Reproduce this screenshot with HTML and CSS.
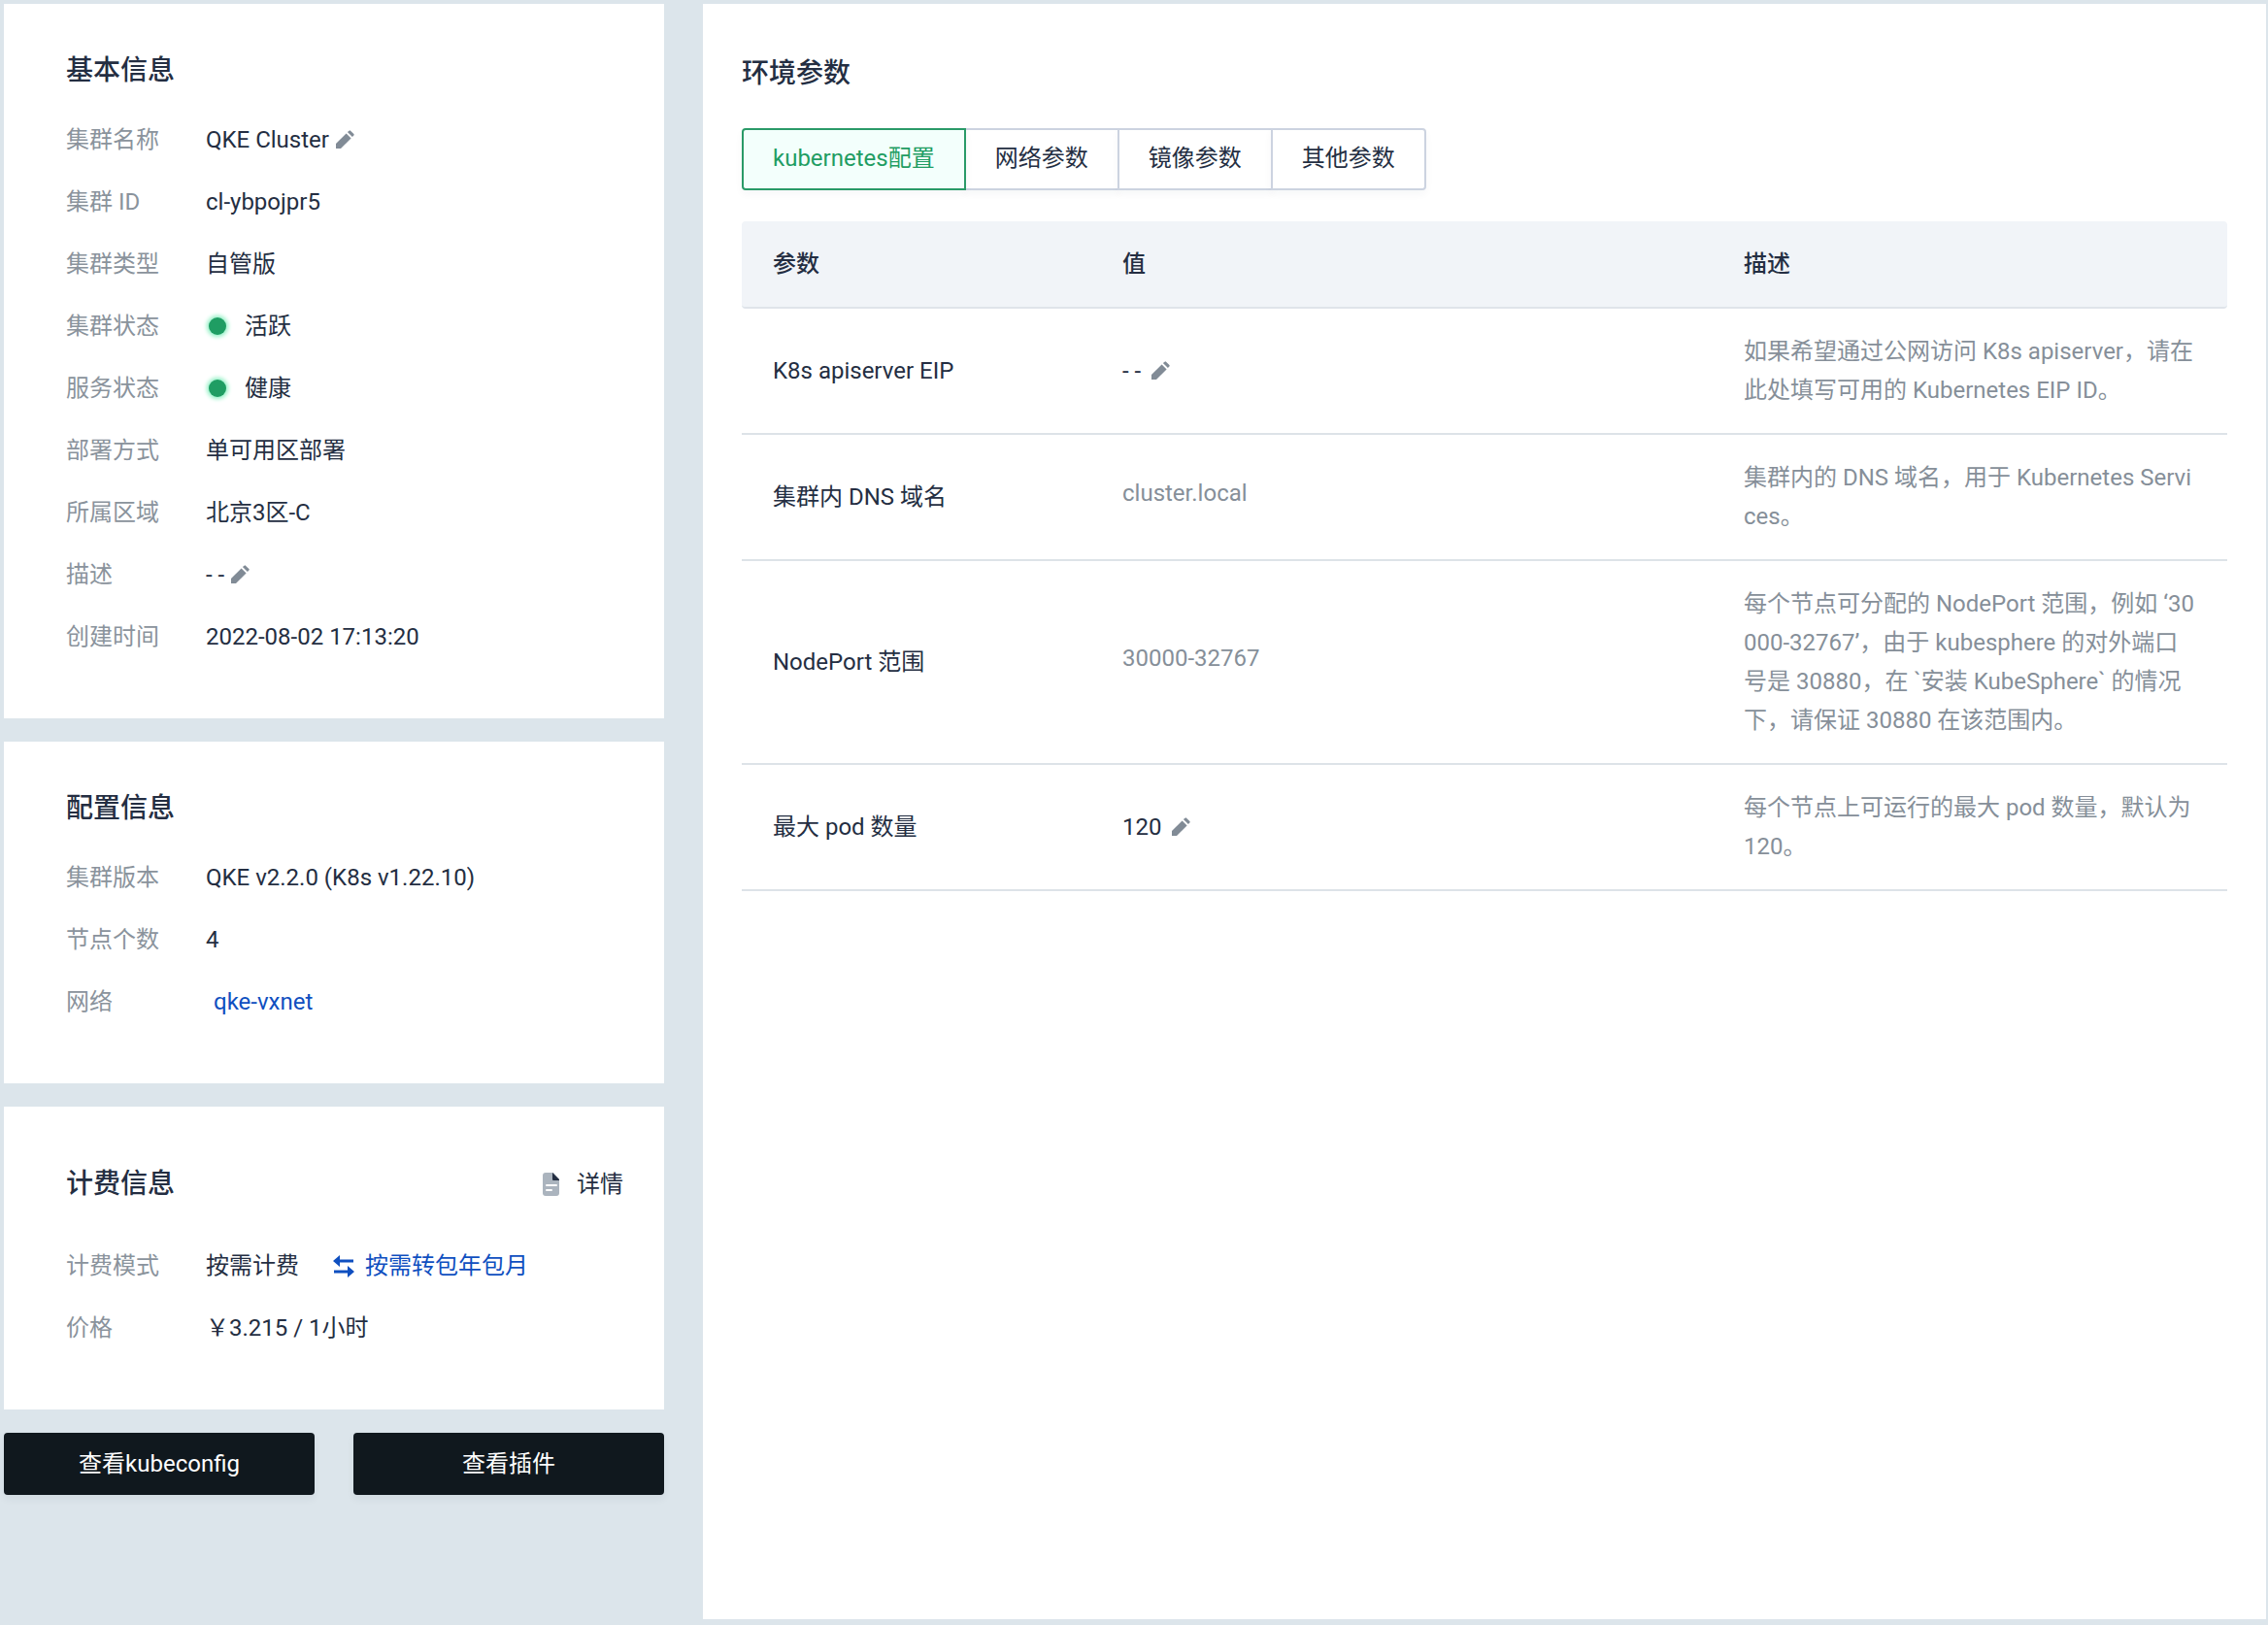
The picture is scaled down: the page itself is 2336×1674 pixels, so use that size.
FILE: index.html
```html
<!DOCTYPE html>
<html lang="zh-CN">
<head>
<meta charset="utf-8">
<title>QKE Cluster</title>
<link rel="stylesheet" href="styles.css">
</head>
<body>
<svg class="sprite" aria-hidden="true">
  <symbol id="pencil" viewBox="0 0 24 24">
    <path d="M3 21v-5L13.600 5.400l5 5L8 21z"/>
    <path d="M14.900 4.100 16.600 2.700a1 1 0 0 1 1.400 0l3.400 3.400a1 1 0 0 1 0 1.400L19.900 9.100z"/>
  </symbol>
</svg>
<div class="page">
  <aside class="sidebar">
    <section class="card">
      <h2 class="title">基本信息</h2>
      <dl class="info">
        <div class="row"><dt>集群名称</dt><dd>QKE Cluster<button class="edit" aria-label="编辑名称"><svg class="icon"><use href="#pencil"/></svg></button></dd></div>
        <div class="row"><dt>集群 ID</dt><dd>cl-ybpojpr5</dd></div>
        <div class="row"><dt>集群类型</dt><dd>自管版</dd></div>
        <div class="row"><dt>集群状态</dt><dd><span class="dot"></span>活跃</dd></div>
        <div class="row"><dt>服务状态</dt><dd><span class="dot"></span>健康</dd></div>
        <div class="row"><dt>部署方式</dt><dd>单可用区部署</dd></div>
        <div class="row"><dt>所属区域</dt><dd>北京3区-C</dd></div>
        <div class="row"><dt>描述</dt><dd>- -<button class="edit" aria-label="编辑描述"><svg class="icon"><use href="#pencil"/></svg></button></dd></div>
        <div class="row"><dt>创建时间</dt><dd>2022-08-02 17:13:20</dd></div>
      </dl>
    </section>
    <section class="card">
      <h2 class="title">配置信息</h2>
      <dl class="info">
        <div class="row"><dt>集群版本</dt><dd>QKE v2.2.0 (K8s v1.22.10)</dd></div>
        <div class="row"><dt>节点个数</dt><dd>4</dd></div>
        <div class="row"><dt>网络</dt><dd><a class="link network" href="#">qke-vxnet</a></dd></div>
      </dl>
    </section>
    <section class="card billing">
      <header class="card-head">
        <h2 class="title">计费信息</h2>
        <a class="details" href="#">
          <svg class="icon" viewBox="0 0 24 24">
            <path fill="#abb4be" d="M6 0h8l6 7v14a3 3 0 0 1-3 3H6a3 3 0 0 1-3-3V3a3 3 0 0 1 3-3z"/>
            <path fill="#242e42" d="M13 0l7 7v1h-6a1 1 0 0 1-1-1z"/>
            <path stroke="#fff" stroke-width="2" stroke-linecap="round" d="M7 13h10M7 18h5"/>
          </svg>
          详情
        </a>
      </header>
      <dl class="info">
        <div class="row"><dt>计费模式</dt><dd>按需计费
          <a class="link switch" href="#">
            <svg class="icon" viewBox="0 0 24 24">
              <path fill="currentColor" d="M1 7l7-6v4.500h14v3H8V13zM23 18l-7-6v4.500H2v3h14V24z"/>
            </svg>
            按需转包年包月
          </a></dd></div>
        <div class="row"><dt>价格</dt><dd>￥3.215 / 1小时</dd></div>
      </dl>
    </section>
    <div class="actions">
      <button class="primary">查看kubeconfig</button>
      <button class="primary">查看插件</button>
    </div>
  </aside>
  <main class="panel">
    <h2 class="title">环境参数</h2>
    <div class="tabs" role="tablist">
      <button class="tab active" role="tab" aria-selected="true">kubernetes配置</button>
      <button class="tab" role="tab">网络参数</button>
      <button class="tab" role="tab">镜像参数</button>
      <button class="tab" role="tab">其他参数</button>
    </div>
    <table class="params">
      <colgroup><col class="col-name"><col class="col-value"><col></colgroup>
      <thead>
        <tr><th>参数</th><th>值</th><th>描述</th></tr>
      </thead>
      <tbody>
        <tr>
          <td>K8s apiserver EIP</td>
          <td><div class="value">- -<button class="edit" aria-label="编辑 EIP"><svg class="icon"><use href="#pencil"/></svg></button></div></td>
          <td class="desc">如果希望通过公网访问 K8s apiserver，请在此处填写可用的 Kubernetes EIP ID。</td>
        </tr>
        <tr>
          <td>集群内 DNS 域名</td>
          <td><div class="value readonly">cluster.local</div></td>
          <td class="desc">集群内的 DNS 域名，用于 Kubernetes Services。</td>
        </tr>
        <tr>
          <td>NodePort 范围</td>
          <td><div class="value readonly">30000-32767</div></td>
          <td class="desc">每个节点可分配的 NodePort 范围，例如 ‘30000-32767’，由于 kubesphere 的对外端口号是 30880，在 `安装 KubeSphere` 的情况下，请保证 30880 在该范围内。</td>
        </tr>
        <tr>
          <td>最大 pod 数量</td>
          <td><div class="value">120<button class="edit" aria-label="编辑 pod 数量"><svg class="icon"><use href="#pencil"/></svg></button></div></td>
          <td class="desc">每个节点上可运行的最大 pod 数量，默认为 120。</td>
        </tr>
      </tbody>
    </table>
  </main>
</div>
</body>
</html>
```
FILE: styles.css
```css
* { box-sizing: border-box; }

body {
  margin: 0;
  background: #dce5eb;
  color: #242e42;
  font: 24px/40px Roboto, "Noto Sans CJK SC", sans-serif;
}

button { font: inherit; color: inherit; cursor: pointer; }
a { text-decoration: none; color: inherit; }
.sprite { display: none; }
.icon { width: 24px; height: 24px; flex: none; display: block; }

.page {
  display: grid;
  grid-template-columns: 680px 1fr;
  gap: 40px;
  min-height: 100vh;
  padding: 4px 2px 6px 4px;
}

.sidebar { display: flex; flex-direction: column; gap: 24px; }
.card { background: #fff; padding: 49px 42px 52px 64px; }
.title { margin: 0; font-size: 28px; line-height: 40px; font-weight: 500; }

.info { margin: 19px 0 0; }
.row { display: flex; align-items: center; height: 64px; }
.row dt { width: 144px; flex: none; color: #8a939c; }
.row dd { display: flex; align-items: center; margin: 0; }

.edit { margin-left: 4px; padding: 0; border: 0; background: none; }
.edit .icon { fill: #818b96; }

.dot {
  width: 18px;
  height: 18px;
  margin: 0 19px 0 3px;
  border-radius: 50%;
  background: #1f9d63;
  box-shadow: 0 0 4px 2px #90f0c4;
}

.link { color: #0f4fc0; }
.network { margin-left: 8px; }
.switch { display: flex; align-items: center; gap: 10px; margin-left: 34px; }

.billing { padding-top: 60px; }
.billing .info { margin-top: 32px; }
.card-head { display: flex; justify-content: space-between; align-items: center; }
.details { display: flex; align-items: center; gap: 14px; }

.actions { display: grid; grid-template-columns: 1fr 1fr; gap: 40px; }
.primary {
  height: 64px;
  border: 0;
  border-radius: 4px;
  background: #10181e;
  color: #fff;
  box-shadow: 0 4px 8px rgba(36, 46, 66, 0.06);
}

.panel { background: #fff; padding: 52px 40px; }

.tabs { display: flex; margin: 36px 0 32px; }
.tab {
  height: 64px;
  padding: 0 30px 2px;
  border: 2px solid #ccd3e0;
  background: #fff;
  box-shadow: 0 4px 8px rgba(36, 46, 66, 0.04);
}
.tab + .tab { margin-left: -2px; }
.tab:last-child { border-radius: 0 4px 4px 0; }
.tab.active {
  z-index: 1;
  border-color: #2a9a68;
  border-radius: 4px 0 0 4px;
  background: #f3fffc;
  color: #1f9d63;
}

.params { width: 100%; table-layout: fixed; border-spacing: 0; }
.col-name { width: 360px; }
.col-value { width: 640px; }
.params th {
  padding: 24px 32px;
  border-bottom: 2px solid #dfe4ea;
  background: #f1f4f8;
  font-weight: 500;
  text-align: left;
}
.params th:first-child { border-radius: 4px 0 0 4px; }
.params th:last-child { border-radius: 0 4px 4px 0; }
.params td { padding: 24px 32px; border-bottom: 2px solid #dde3e8; vertical-align: middle; }
.params .desc { color: #868f99; word-break: break-all; }
.value { display: flex; align-items: center; }
.value .edit { margin-left: 8px; }
.readonly { padding-bottom: 8px; color: #868f99; }
```
